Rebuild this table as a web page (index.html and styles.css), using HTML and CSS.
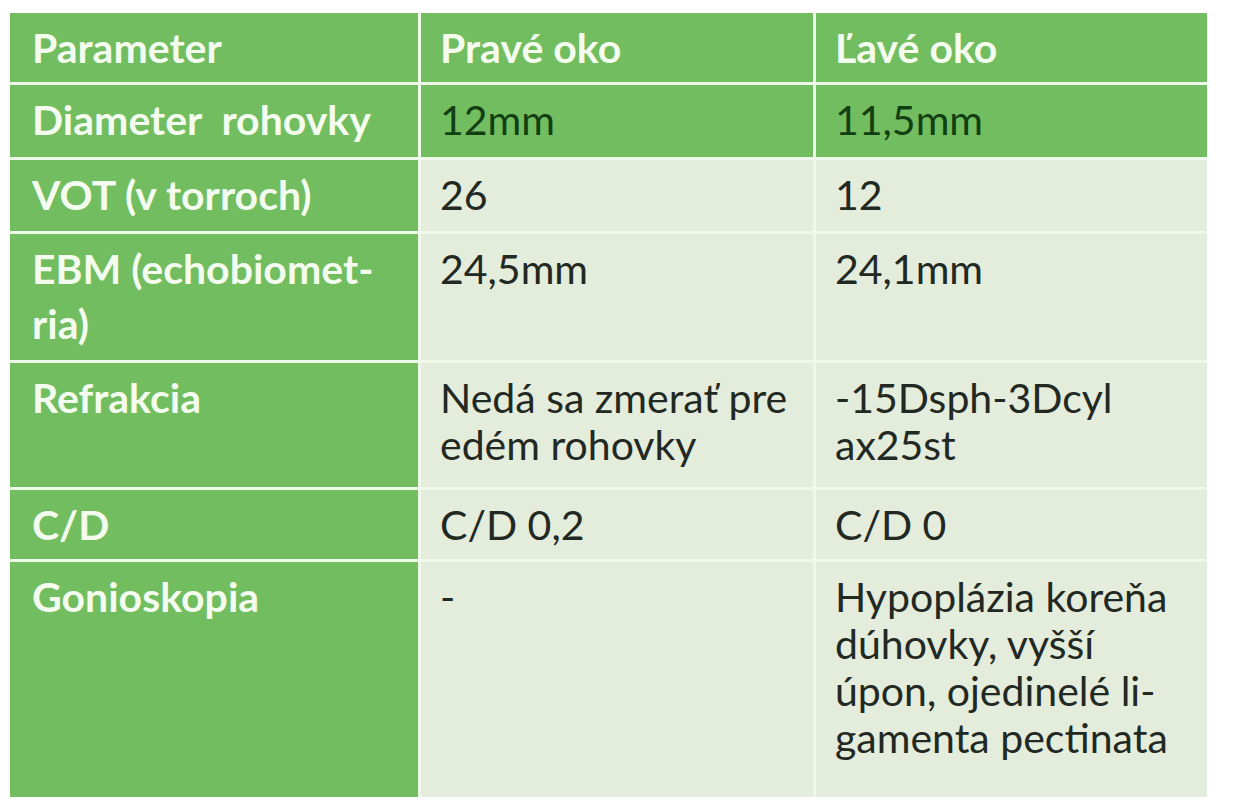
FILE: index.html
```html
<!DOCTYPE html>
<html lang="sk">
<head>
<meta charset="utf-8">
<title>Parametre oka</title>
<link rel="stylesheet" href="styles.css">
</head>
<body>
<div class="table">
  <div class="cell head first">Parameter</div>
  <div class="cell head">Pravé oko</div>
  <div class="cell head">Ľavé oko</div>

  <div class="cell first">Diameter&nbsp; rohovky</div>
  <div class="cell hi">12mm</div>
  <div class="cell hi">11,5mm</div>

  <div class="cell first">VOT (v torroch)</div>
  <div class="cell">26</div>
  <div class="cell">12</div>

  <div class="cell first tall">EBM (echobiomet-<br>ria)</div>
  <div class="cell">24,5mm</div>
  <div class="cell">24,1mm</div>

  <div class="cell first">Refrakcia</div>
  <div class="cell">Nedá sa zmerať pre<br>edém rohovky</div>
  <div class="cell">-15Dsph-3Dcyl<br>ax25st</div>

  <div class="cell first">C/D</div>
  <div class="cell">C/D 0,2</div>
  <div class="cell">C/D 0</div>

  <div class="cell first">Gonioskopia</div>
  <div class="cell">-</div>
  <div class="cell">Hypoplázia koreňa<br>dúhovky, vyšší<br>úpon, ojedinelé li-<br>gamenta pectinata</div>
</div>
</body>
</html>
```

FILE: styles.css
```css
html, body {
  margin: 0;
  padding: 0;
  background: #ffffff;
}
body {
  padding: 13px 0 0 10px;
  font-family: "Lato", "Liberation Sans", sans-serif;
}
.table {
  display: grid;
  width: 1197px;
  grid-template-columns: 408px 392px 391px;
  grid-template-rows: 69px 72px 71px 126px 124px 69px 235px;
  gap: 3px;
  background: #eef9ea;
}
.cell {
  background: #e4ecdb;
  color: #222822;
  font-size: 41px;
  line-height: 47px;
  padding: 11px 0 0 19px;
  white-space: nowrap;
}
.cell.head,
.cell.hi,
.cell.first {
  background: #72bd60;
}
.cell.head,
.cell.first {
  color: #f3fcee;
  font-weight: 700;
}
.cell.first {
  padding-left: 22px;
}
.cell.first.tall {
  line-height: 55px;
  padding-top: 7px;
}
.cell.hi {
  color: #123f12;
}
```
